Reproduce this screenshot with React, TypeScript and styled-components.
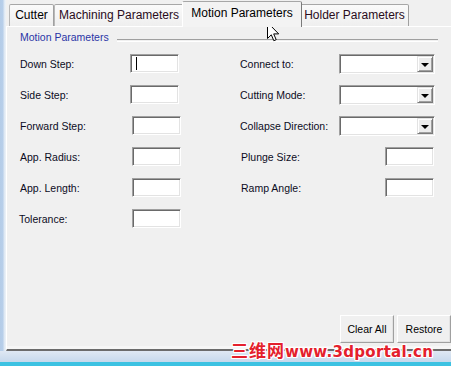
import React from "react";
import styled, { createGlobalStyle } from "styled-components";

const GlobalStyle = createGlobalStyle`
  html, body { margin: 0; padding: 0; background: #f0f0f0; }
  body { font-family: "Liberation Sans", Arial, sans-serif; }
  #root { width: 451px; height: 366px; overflow: hidden; }
`;

const Screen = styled.div`
  position: relative;
  width: 451px;
  height: 366px;
  display: flex;
  flex-direction: column;
  overflow: hidden;
  background: #f0f0f0;
`;

const Body = styled.div`
  display: flex;
  height: 351px;
  flex: none;
`;

const FrameEdge = styled.div`
  width: 6px;
  flex: none;
  background: linear-gradient(90deg, #b4cce8 0, #b8cfea 3px, #dbe6f2 4px, #eef3f8 6px);
`;

const Main = styled.div`
  flex: 1;
  display: flex;
  flex-direction: column;
  min-width: 0;
`;

const TabStrip = styled.div`
  height: 26px;
  flex: none;
  display: flex;
  align-items: flex-end;
  padding-left: 3px;
  position: relative;
  z-index: 2;
`;

const Tab = styled.div<{ $w: number; $active?: boolean; $ink?: string }>`
  box-sizing: border-box;
  width: ${(p) => p.$w + (p.$active ? 4 : 0)}px;
  height: ${(p) => (p.$active ? 26 : 22)}px;
  margin: ${(p) => (p.$active ? "0 -2px -1px -2px" : "0")};
  padding-top: ${(p) => (p.$active ? 1 : 0)}px;
  position: relative;
  z-index: ${(p) => (p.$active ? 1 : 0)};
  border: 1px solid #a7a7a7;
  border-bottom: none;
  border-left-color: ${(p) => (p.$active ? "#ffffff" : "#b8b8b8")};
  border-right-color: ${(p) => (p.$active ? "#7a7a7a" : "#a0a0a0")};
  border-radius: 2px 2px 0 0;
  background: ${(p) =>
    p.$active ? "#f3f3f3" : "linear-gradient(#fafafa, #efefef)"};
  color: ${(p) => p.$ink || "#000"};
  font-size: 12px;
  line-height: 20px;
  text-align: center;
  white-space: nowrap;
`;

const Panel = styled.div`
  flex: 1;
  display: flex;
  flex-direction: column;
  border-top: 1px solid #ffffff;
  border-left: 1px solid #ffffff;
  border-bottom: 2px solid #6b6b6b;
  box-shadow: inset 0 -3px 0 #f6f6f6;
  background: #f0f0f0;
`;

const GroupHeader = styled.div`
  display: flex;
  align-items: flex-start;
  margin-top: 4px;
  padding: 0 13px;
`;

const Legend = styled.span`
  font-size: 10.5px;
  line-height: 13px;
  color: #2a35a6;
  white-space: nowrap;
`;

const Rule = styled.div`
  flex: 1;
  margin-left: 8px;
  margin-top: 8px;
  height: 1px;
  border-top: 1px solid #a0a0a0;
  border-bottom: 1px solid #ffffff;
`;

const Columns = styled.div`
  display: flex;
  margin-top: 10px;
  padding-left: 13px;
`;

const Column = styled.div<{ $w: number }>`
  width: ${(p) => p.$w}px;
  display: flex;
  flex-direction: column;
  gap: 11px;
`;

const LeftRow = styled.div<{ $labelW: number }>`
  display: grid;
  grid-template-columns: ${(p) => p.$labelW}px 49px;
  height: 20px;
  align-items: start;
`;

const RightRow = styled.div`
  display: flex;
  justify-content: space-between;
  align-items: flex-start;
  height: 20px;
`;

const Label = styled.span<{ $shift?: number }>`
  font-size: 10.5px;
  line-height: 20px;
  color: #0c0c1e;
  white-space: nowrap;
  margin-left: ${(p) => p.$shift || 0}px;
`;

const Field = styled.div<{ $w?: number; $trim?: number }>`
  box-sizing: border-box;
  width: ${(p) => p.$w || 49}px;
  height: 19px;
  margin-right: ${(p) => p.$trim || 0}px;
  background: #ffffff;
  border-top: 1px solid #a0a0a0;
  border-left: 1px solid #a0a0a0;
  border-right: 1px solid #ffffff;
  border-bottom: 1px solid #ffffff;
  box-shadow: inset 1px 1px 0 #6a6a6a, inset -1px -1px 0 #e3e3e3;
  display: flex;
  align-items: center;
  padding-left: 5px;
`;

const Caret = styled.span`
  width: 1px;
  height: 13px;
  background: #000;
`;

const Combo = styled.div`
  box-sizing: border-box;
  width: 96px;
  height: 20px;
  background: #ffffff;
  border-top: 1px solid #a0a0a0;
  border-left: 1px solid #a0a0a0;
  border-right: 1px solid #ffffff;
  border-bottom: 1px solid #ffffff;
  box-shadow: inset 1px 1px 0 #6a6a6a, inset -1px -1px 0 #e3e3e3;
  display: flex;
  justify-content: flex-end;
  padding: 1px 1px 1px 0;
`;

const DropButton = styled.div`
  box-sizing: border-box;
  width: 16px;
  height: 16px;
  background: #ececec;
  border-top: 1px solid #e3e3e3;
  border-left: 1px solid #e3e3e3;
  border-right: 1px solid #7a7a7a;
  border-bottom: 1px solid #7a7a7a;
  box-shadow: inset 1px 1px 0 #ffffff, inset -1px -1px 0 #a0a0a0;
  display: flex;
  align-items: center;
  justify-content: center;
`;

const Arrow = styled.span`
  width: 0;
  height: 0;
  border-left: 4px solid transparent;
  border-right: 4px solid transparent;
  border-top: 4px solid #000;
  margin-top: 1px;
`;

const ButtonRow = styled.div`
  margin-top: auto;
  display: flex;
  justify-content: flex-end;
  gap: 3px;
  padding: 0 0 6px 0;
`;

const Button = styled.div`
  box-sizing: border-box;
  width: 54px;
  height: 28px;
  background: #f0f0f0;
  border-top: 1px solid #ffffff;
  border-left: 1px solid #ffffff;
  border-right: 1px solid #a0a0a0;
  border-bottom: 1px solid #a0a0a0;
  box-shadow: inset -1px -1px 0 #e3e3e3;
  font-size: 10.5px;
  line-height: 26px;
  color: #000;
  text-align: center;
`;

const BottomStrip = styled.div`
  flex: 1;
  background: linear-gradient(
    #dfe8f3 0,
    #c6d8ec 11px,
    #3cc2e2 11px,
    #3cc2e2 100%
  );
`;

const Watermark = styled.div`
  position: absolute;
  left: 231px;
  top: 340px;
  display: flex;
  align-items: baseline;
  color: #e4202c;
  font-weight: bold;
  white-space: nowrap;
  text-shadow: 1px 0 0 #fff, -1px 0 0 #fff, 0 1px 0 #fff, 0 -1px 0 #fff,
    1px 1px 0 #fff, -1px -1px 0 #fff, 1px -1px 0 #fff, -1px 1px 0 #fff;
`;

const WatermarkCjk = styled.span`
  font-family: "Noto Sans CJK SC", sans-serif;
  font-size: 17px;
  line-height: 20px;
  letter-spacing: 1px;
`;

const WatermarkLatin = styled.span`
  font-family: "DejaVu Sans", sans-serif;
  font-size: 15px;
  line-height: 20px;
  letter-spacing: 0.3px;
`;

const Pointer = styled.svg`
  position: absolute;
  left: 267px;
  top: 22px;
  width: 13px;
  height: 20px;
`;

const leftRows = [
  { label: "Down Step:", w: 110, caret: true },
  { label: "Side Step:", w: 110 },
  { label: "Forward Step:", w: 112 },
  { label: "App. Radius:", w: 112 },
  { label: "App. Length:", w: 112 },
  { label: "Tolerance:", w: 112, shift: -1 },
];

export default function App() {
  return (
    <>
      <GlobalStyle />
      <Screen>
        <Body>
          <FrameEdge />
          <Main>
            <TabStrip>
              <Tab $w={45}>Cutter</Tab>
              <Tab $w={130} $ink="#2a0c1c">Machining Parameters</Tab>
              <Tab $w={116} $active>Motion Parameters</Tab>
              <Tab $w={109} $ink="#2a0c1c">Holder Parameters</Tab>
            </TabStrip>
            <Panel>
              <GroupHeader>
                <Legend>Motion Parameters</Legend>
                <Rule />
              </GroupHeader>
              <Columns>
                <Column $w={220}>
                  {leftRows.map((r) => (
                    <LeftRow key={r.label} $labelW={r.w}>
                      <Label $shift={r.shift}>{r.label}</Label>
                      <Field>{r.caret ? <Caret /> : null}</Field>
                    </LeftRow>
                  ))}
                </Column>
                <Column $w={195}>
                  {["Connect to:", "Cutting Mode:", "Collapse Direction:"].map((l) => (
                    <RightRow key={l}>
                      <Label>{l}</Label>
                      <Combo>
                        <DropButton>
                          <Arrow />
                        </DropButton>
                      </Combo>
                    </RightRow>
                  ))}
                  {["Plunge Size:", "Ramp Angle:"].map((l) => (
                    <RightRow key={l}>
                      <Label $shift={1}>{l}</Label>
                      <Field $trim={1} />
                    </RightRow>
                  ))}
                </Column>
              </Columns>
              <ButtonRow>
                <Button>Clear All</Button>
                <Button>Restore</Button>
              </ButtonRow>
            </Panel>
          </Main>
        </Body>
        <BottomStrip />
        <Watermark>
          <WatermarkCjk>三维网</WatermarkCjk>
          <WatermarkLatin>www.3dportal.cn</WatermarkLatin>
        </Watermark>
        <Pointer viewBox="0 0 13 20">
          <path
            d="M0.5 0.5 L0.5 16.5 L4.3 12.8 L6.8 18.7 L9.2 17.7 L6.7 11.9 L11.7 11.9 Z"
            fill="#fff"
            stroke="#000"
            strokeWidth="1"
            strokeLinejoin="miter"
          />
        </Pointer>
      </Screen>
    </>
  );
}
